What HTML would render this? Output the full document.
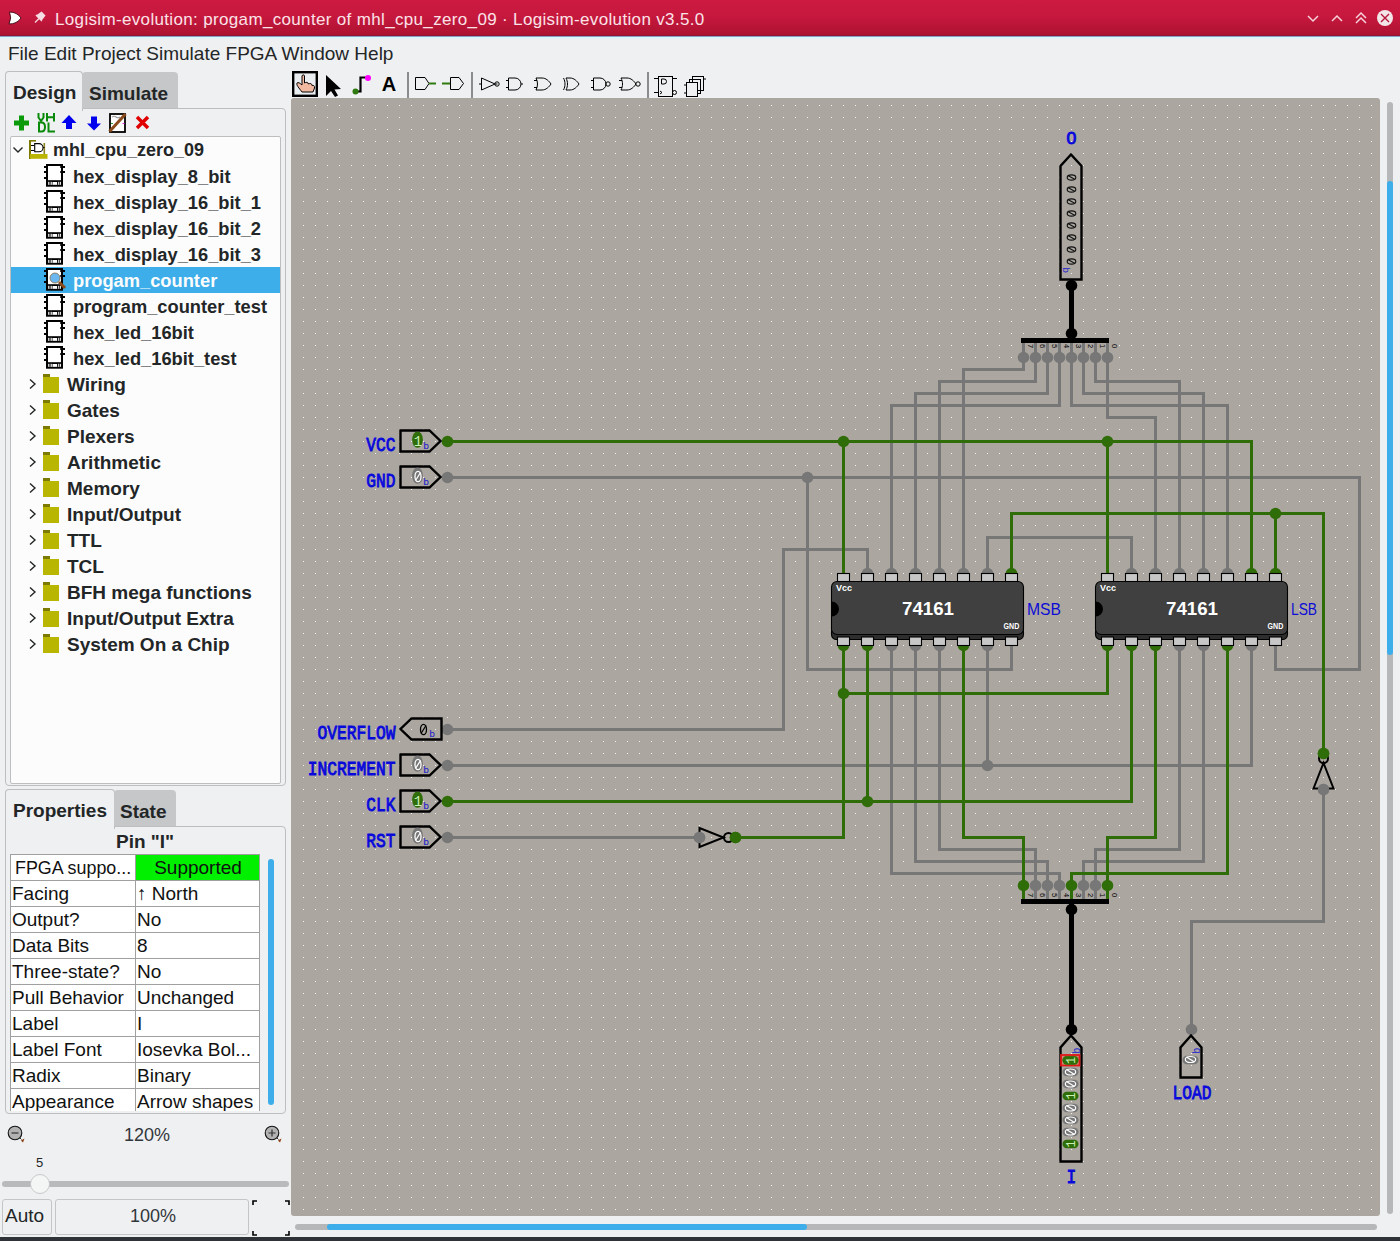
<!DOCTYPE html>
<html><head><meta charset="utf-8">
<style>
*{margin:0;padding:0;box-sizing:border-box}
html,body{width:1400px;height:1241px;overflow:hidden;background:#eff0f1;font-family:"Liberation Sans",sans-serif;color:#232627}
.abs{position:absolute}
#title{left:0;top:0;width:1400px;height:35px;background:linear-gradient(#cc1a41 0%,#c7183e 45%,#ad1231 100%)}
#title .t{left:55px;top:10px;font-size:17px;letter-spacing:0.34px;color:#fbe3e8;white-space:nowrap}
#menu{left:8px;top:42.5px;font-size:19px;white-space:nowrap;color:#232627}
.tab{font-weight:bold;font-size:19px;white-space:nowrap}
.row{position:absolute;height:26px;left:11px;width:270px}
.row span{position:absolute;top:3px;font-weight:bold;font-size:19px;white-space:nowrap;color:#232627}
.row svg{position:absolute}
.prop{position:absolute;font-size:19px;white-space:nowrap;color:#111}
</style></head><body>
<svg width="0" height="0" style="position:absolute">
 <defs>
  <symbol id="chip" viewBox="0 0 22 24">
   <rect x="3" y="1" width="15" height="20.7" fill="#fff" stroke="#000" stroke-width="2"/>
   <path d="M0 3h3M0 8h3M0 14h3M18 3h3M18 8h3" stroke="#000" stroke-width="1.9"/>
   <path d="M16 3h2M16 8h2" stroke="#000" stroke-width="1.6"/>
   <rect x="4" y="16.2" width="13" height="4.6" fill="#000"/>
   <rect x="4.2" y="17.8" width="1.2" height="3" fill="#fff"/>
   <rect x="6.6" y="17.8" width="1.2" height="3" fill="#fff"/>
   <rect x="8.5" y="18" width="4.6" height="2.8" fill="#fff"/>
   <rect x="14.2" y="17.8" width="1.1" height="3" fill="#fff"/>
   <rect x="16.1" y="17.8" width="0.9" height="3" fill="#fff"/>
  </symbol>
  <symbol id="folder" viewBox="0 0 17 20">
   <rect x="0" y="0" width="7" height="3" fill="#7c7a00"/>
   <rect x="0" y="3" width="16" height="16" fill="#b8b600"/>
  </symbol>
 </defs>
</svg>
<div id="title" class="abs">
  <svg class="abs" style="left:0;top:0" width="50" height="35" viewBox="0 0 50 35">
    <path d="M9.5 12 Q17 12 21 18 Q17 24 9 24 Q12 18 9.5 12Z" fill="#fff" stroke="#3a0a14" stroke-width="0.9"/>
    <path d="M35 22.5 L39 18.5" stroke="#f6dde3" stroke-width="1.3"/>
    <path d="M37.5 15.5 L41.5 12.5 L44.5 15.5 L41.5 19.5Z M36 15 L42 21" stroke="#f6dde3" stroke-width="1.6" fill="#f6dde3"/>
  </svg>
  <div class="abs t">Logisim-evolution: progam_counter of mhl_cpu_zero_09 · Logisim-evolution v3.5.0</div>
  <svg class="abs" style="left:1300px;top:0px" width="100" height="36" viewBox="1300 0 100 36">
    <path d="M1308 16 L1313 21 L1318 16" stroke="#f6d2da" stroke-width="1.5" fill="none"/>
    <path d="M1332 21 L1337 16 L1342 21" stroke="#f6d2da" stroke-width="1.5" fill="none"/>
    <path d="M1356 18 L1361 13 L1366 18 M1356 23 L1361 18 L1366 23" stroke="#f6d2da" stroke-width="1.5" fill="none"/>
    <circle cx="1385" cy="18" r="8" fill="#f3e6e9"/>
    <path d="M1381 14 L1389 22 M1389 14 L1381 22" stroke="#b5163a" stroke-width="1.4"/>
  </svg>
</div>
<div class="abs" style="left:0;top:35px;width:1400px;height:1px;background:#8c1535"></div><div class="abs" style="left:0;top:36px;width:1400px;height:1px;background:#8f9cc0"></div><div class="abs" style="left:0;top:37px;width:1400px;height:1px;background:#d2fbfc"></div><div class="abs" style="left:0;top:38px;width:1400px;height:1px;background:#e6f0f4"></div>
<div id="menu" class="abs">File Edit Project Simulate FPGA Window Help</div>

<!-- Design/Simulate tabs -->
<div class="abs" style="left:5px;top:71px;width:78px;height:40px;border:1px solid #bcbebf;border-bottom:none;border-radius:4px 4px 0 0;background:#eff0f1"></div>
<div class="abs" style="left:82px;top:72px;width:96px;height:36px;background:#c6c7c8;border-radius:4px 4px 0 0"></div>
<div class="abs tab" style="left:13px;top:82px">Design</div>
<div class="abs tab" style="left:89px;top:83px">Simulate</div>
<div class="abs" style="left:5px;top:108px;width:281px;height:678px;border:1px solid #bcbebf;border-top:1px solid #bcbebf;border-radius:0 4px 4px 4px"></div>
<div class="abs" style="left:6px;top:107px;width:76px;height:3px;background:#eff0f1"></div>
<!-- toolbar icons -->
<svg class="abs" style="left:10px;top:110px" width="145" height="26" viewBox="10 110 145 26">
  <path d="M14 123h15M21.5 115.5v15" stroke="#0a9a0a" stroke-width="5"/>
  <g stroke="#0a8a0a" stroke-width="2" fill="none">
   <path d="M38.5 113 V117.5 L41 121 L43.5 117.5 V113"/>
   <path d="M47 113 V121.5 M47 117.2 H54 M54 113 V121.5"/>
   <path d="M39 122.5 H41.5 Q45 122.5 45 127 Q45 131.5 41.5 131.5 H39 Z"/>
   <path d="M48.5 122.5 V131.5 H55"/>
  </g>
  <path d="M61.5 123 L69 115 L76.5 123 L72 123 L72 129 L66 129 L66 123Z" fill="#0000ee"/>
  <path d="M87 123.5 L94 130.5 L101 123.5 L97 123.5 L97 116.5 L91 116.5 L91 123.5Z" fill="#0000ee"/>
  <rect x="110" y="114" width="15" height="18" fill="#fff" stroke="#000" stroke-width="1.8"/>
  <path d="M112 117 Q114 115.5 116 117 T120 117" stroke="#999" stroke-width="1.2" fill="none"/>
  <path d="M111 123.5h2" stroke="#2a9a2a" stroke-width="1"/>
  <path d="M122.5 123.5h2" stroke="#e020e0" stroke-width="1"/>
  <path d="M109.5 131.5 L125.5 114" stroke="#8b4a1c" stroke-width="3"/>
  <path d="M137 117 L148 128 M148 117 L137 128" stroke="#e00000" stroke-width="3.5"/>
</svg>
<!-- tree -->
<div class="abs" style="left:10px;top:136px;width:271px;height:648px;background:#fcfcfc;border:1px solid #bcbebf;border-radius:2px"></div>
<div class="abs" style="left:11px;top:267px;width:269px;height:26px;background:#3daee9"></div>
<svg class="abs" style="left:12px;top:144px" width="12" height="12" viewBox="0 0 12 12"><path d="M1.5 3.5 L6 8 L10.5 3.5" stroke="#232627" stroke-width="1.4" fill="none"/></svg>
<svg class="abs" style="left:24px;top:136px" width="28" height="28" viewBox="24 136 28 28">
  <rect x="29" y="140" width="2" height="19" fill="#7c7800"/>
  <rect x="29" y="140" width="7" height="1.6" fill="#7c7800"/>
  <rect x="43.5" y="143" width="1.6" height="11" fill="#8a8720"/>
  <rect x="30" y="154" width="17.5" height="4.8" fill="#b9b500"/>
  <path d="M31 145.5h3.5M31 150.5h3.5M41.5 147.5h3" stroke="#000" stroke-width="1"/>
  <path d="M34.7 143.6h4.3a4 4 0 0 1 0 8.1h-4.3Z" fill="#fff" stroke="#000" stroke-width="1.1"/>
</svg>
<div class="abs" style="left:53px;top:140px;font-weight:bold;font-size:18px;white-space:nowrap">mhl_cpu_zero_09</div>
<svg class="abs" style="left:44px;top:164px" width="22" height="24"><use href="#chip"/></svg>
<div class="abs" style="left:73px;top:166px;font-weight:bold;font-size:18.3px;white-space:nowrap;color:#232627">hex_display_8_bit</div>
<svg class="abs" style="left:44px;top:190px" width="22" height="24"><use href="#chip"/></svg>
<div class="abs" style="left:73px;top:192px;font-weight:bold;font-size:18.3px;white-space:nowrap;color:#232627">hex_display_16_bit_1</div>
<svg class="abs" style="left:44px;top:216px" width="22" height="24"><use href="#chip"/></svg>
<div class="abs" style="left:73px;top:218px;font-weight:bold;font-size:18.3px;white-space:nowrap;color:#232627">hex_display_16_bit_2</div>
<svg class="abs" style="left:44px;top:242px" width="22" height="24"><use href="#chip"/></svg>
<div class="abs" style="left:73px;top:244px;font-weight:bold;font-size:18.3px;white-space:nowrap;color:#232627">hex_display_16_bit_3</div>
<svg class="abs" style="left:44px;top:268px" width="22" height="24"><use href="#chip"/></svg>
<svg class="abs" style="left:48px;top:271px" width="20" height="20" viewBox="0 0 20 20"><circle cx="7" cy="7" r="5" fill="#6ab8ef" stroke="#8a6a40" stroke-width="0.8"/><path d="M11 11 L17 17" stroke="#8b4a1c" stroke-width="3"/></svg>
<div class="abs" style="left:73px;top:270px;font-weight:bold;font-size:18.3px;white-space:nowrap;color:#fcfcfc">progam_counter</div>
<svg class="abs" style="left:44px;top:294px" width="22" height="24"><use href="#chip"/></svg>
<div class="abs" style="left:73px;top:296px;font-weight:bold;font-size:18.3px;white-space:nowrap;color:#232627">program_counter_test</div>
<svg class="abs" style="left:44px;top:320px" width="22" height="24"><use href="#chip"/></svg>
<div class="abs" style="left:73px;top:322px;font-weight:bold;font-size:18.3px;white-space:nowrap;color:#232627">hex_led_16bit</div>
<svg class="abs" style="left:44px;top:346px" width="22" height="24"><use href="#chip"/></svg>
<div class="abs" style="left:73px;top:348px;font-weight:bold;font-size:18.3px;white-space:nowrap;color:#232627">hex_led_16bit_test</div>
<svg class="abs" style="left:28px;top:378px" width="9" height="12" viewBox="0 0 9 12"><path d="M2 1.5 L7 6 L2 10.5" stroke="#232627" stroke-width="1.4" fill="none"/></svg>
<svg class="abs" style="left:43px;top:374px" width="17" height="20"><use href="#folder"/></svg>
<div class="abs" style="left:67px;top:374px;font-weight:bold;font-size:19px;white-space:nowrap">Wiring</div>
<svg class="abs" style="left:28px;top:404px" width="9" height="12" viewBox="0 0 9 12"><path d="M2 1.5 L7 6 L2 10.5" stroke="#232627" stroke-width="1.4" fill="none"/></svg>
<svg class="abs" style="left:43px;top:400px" width="17" height="20"><use href="#folder"/></svg>
<div class="abs" style="left:67px;top:400px;font-weight:bold;font-size:19px;white-space:nowrap">Gates</div>
<svg class="abs" style="left:28px;top:430px" width="9" height="12" viewBox="0 0 9 12"><path d="M2 1.5 L7 6 L2 10.5" stroke="#232627" stroke-width="1.4" fill="none"/></svg>
<svg class="abs" style="left:43px;top:426px" width="17" height="20"><use href="#folder"/></svg>
<div class="abs" style="left:67px;top:426px;font-weight:bold;font-size:19px;white-space:nowrap">Plexers</div>
<svg class="abs" style="left:28px;top:456px" width="9" height="12" viewBox="0 0 9 12"><path d="M2 1.5 L7 6 L2 10.5" stroke="#232627" stroke-width="1.4" fill="none"/></svg>
<svg class="abs" style="left:43px;top:452px" width="17" height="20"><use href="#folder"/></svg>
<div class="abs" style="left:67px;top:452px;font-weight:bold;font-size:19px;white-space:nowrap">Arithmetic</div>
<svg class="abs" style="left:28px;top:482px" width="9" height="12" viewBox="0 0 9 12"><path d="M2 1.5 L7 6 L2 10.5" stroke="#232627" stroke-width="1.4" fill="none"/></svg>
<svg class="abs" style="left:43px;top:478px" width="17" height="20"><use href="#folder"/></svg>
<div class="abs" style="left:67px;top:478px;font-weight:bold;font-size:19px;white-space:nowrap">Memory</div>
<svg class="abs" style="left:28px;top:508px" width="9" height="12" viewBox="0 0 9 12"><path d="M2 1.5 L7 6 L2 10.5" stroke="#232627" stroke-width="1.4" fill="none"/></svg>
<svg class="abs" style="left:43px;top:504px" width="17" height="20"><use href="#folder"/></svg>
<div class="abs" style="left:67px;top:504px;font-weight:bold;font-size:19px;white-space:nowrap">Input/Output</div>
<svg class="abs" style="left:28px;top:534px" width="9" height="12" viewBox="0 0 9 12"><path d="M2 1.5 L7 6 L2 10.5" stroke="#232627" stroke-width="1.4" fill="none"/></svg>
<svg class="abs" style="left:43px;top:530px" width="17" height="20"><use href="#folder"/></svg>
<div class="abs" style="left:67px;top:530px;font-weight:bold;font-size:19px;white-space:nowrap">TTL</div>
<svg class="abs" style="left:28px;top:560px" width="9" height="12" viewBox="0 0 9 12"><path d="M2 1.5 L7 6 L2 10.5" stroke="#232627" stroke-width="1.4" fill="none"/></svg>
<svg class="abs" style="left:43px;top:556px" width="17" height="20"><use href="#folder"/></svg>
<div class="abs" style="left:67px;top:556px;font-weight:bold;font-size:19px;white-space:nowrap">TCL</div>
<svg class="abs" style="left:28px;top:586px" width="9" height="12" viewBox="0 0 9 12"><path d="M2 1.5 L7 6 L2 10.5" stroke="#232627" stroke-width="1.4" fill="none"/></svg>
<svg class="abs" style="left:43px;top:582px" width="17" height="20"><use href="#folder"/></svg>
<div class="abs" style="left:67px;top:582px;font-weight:bold;font-size:19px;white-space:nowrap">BFH mega functions</div>
<svg class="abs" style="left:28px;top:612px" width="9" height="12" viewBox="0 0 9 12"><path d="M2 1.5 L7 6 L2 10.5" stroke="#232627" stroke-width="1.4" fill="none"/></svg>
<svg class="abs" style="left:43px;top:608px" width="17" height="20"><use href="#folder"/></svg>
<div class="abs" style="left:67px;top:608px;font-weight:bold;font-size:19px;white-space:nowrap">Input/Output Extra</div>
<svg class="abs" style="left:28px;top:638px" width="9" height="12" viewBox="0 0 9 12"><path d="M2 1.5 L7 6 L2 10.5" stroke="#232627" stroke-width="1.4" fill="none"/></svg>
<svg class="abs" style="left:43px;top:634px" width="17" height="20"><use href="#folder"/></svg>
<div class="abs" style="left:67px;top:634px;font-weight:bold;font-size:19px;white-space:nowrap">System On a Chip</div>


<!-- Properties panel -->
<div class="abs" style="left:5px;top:789px;width:110px;height:40px;border:1px solid #bcbebf;border-bottom:none;border-radius:4px 4px 0 0;background:#eff0f1"></div>
<div class="abs" style="left:114px;top:790px;width:62px;height:37px;background:#c6c7c8;border-radius:4px 4px 0 0"></div>
<div class="abs" style="left:5px;top:826px;width:281px;height:288px;border:1px solid #bcbebf;border-radius:0 4px 4px 4px"></div>
<div class="abs" style="left:6px;top:825px;width:108px;height:3px;background:#eff0f1"></div>
<div class="abs tab" style="left:13px;top:800px">Properties</div>
<div class="abs tab" style="left:120px;top:801px">State</div>
<div class="abs tab" style="left:116px;top:831px">Pin "I"</div>
<div class="abs" style="left:10px;top:854px;width:250px;height:257px;background:#fff;overflow:hidden;border-left:1px solid #a0a0a0;border-right:1px solid #a0a0a0">
<div class="abs" style="left:0;top:0px;width:250px;height:27px;border-top:1px solid #a0a0a0"></div>
<div class="abs" style="left:124px;top:0px;width:1px;height:27px;background:#a0a0a0"></div>
<div class="abs" style="left:125px;top:1px;width:124px;height:25px;background:#00f000"></div>
<div class="prop" style="left:125px;width:124px;text-align:center;top:3px">Supported</div>
<div class="prop" style="left:4px;top:3px;transform:scaleX(0.94);transform-origin:0 0">FPGA suppo...</div>
<div class="abs" style="left:0;top:26px;width:250px;height:27px;border-top:1px solid #a0a0a0"></div>
<div class="abs" style="left:124px;top:26px;width:1px;height:27px;background:#a0a0a0"></div>
<div class="prop" style="left:1px;top:29px">Facing</div>
<div class="prop" style="left:126px;top:29px">↑ North</div>
<div class="abs" style="left:0;top:52px;width:250px;height:27px;border-top:1px solid #a0a0a0"></div>
<div class="abs" style="left:124px;top:52px;width:1px;height:27px;background:#a0a0a0"></div>
<div class="prop" style="left:1px;top:55px">Output?</div>
<div class="prop" style="left:126px;top:55px">No</div>
<div class="abs" style="left:0;top:78px;width:250px;height:27px;border-top:1px solid #a0a0a0"></div>
<div class="abs" style="left:124px;top:78px;width:1px;height:27px;background:#a0a0a0"></div>
<div class="prop" style="left:1px;top:81px">Data Bits</div>
<div class="prop" style="left:126px;top:81px">8</div>
<div class="abs" style="left:0;top:104px;width:250px;height:27px;border-top:1px solid #a0a0a0"></div>
<div class="abs" style="left:124px;top:104px;width:1px;height:27px;background:#a0a0a0"></div>
<div class="prop" style="left:1px;top:107px">Three-state?</div>
<div class="prop" style="left:126px;top:107px">No</div>
<div class="abs" style="left:0;top:130px;width:250px;height:27px;border-top:1px solid #a0a0a0"></div>
<div class="abs" style="left:124px;top:130px;width:1px;height:27px;background:#a0a0a0"></div>
<div class="prop" style="left:1px;top:133px">Pull Behavior</div>
<div class="prop" style="left:126px;top:133px">Unchanged</div>
<div class="abs" style="left:0;top:156px;width:250px;height:27px;border-top:1px solid #a0a0a0"></div>
<div class="abs" style="left:124px;top:156px;width:1px;height:27px;background:#a0a0a0"></div>
<div class="prop" style="left:1px;top:159px">Label</div>
<div class="prop" style="left:126px;top:159px">I</div>
<div class="abs" style="left:0;top:182px;width:250px;height:27px;border-top:1px solid #a0a0a0"></div>
<div class="abs" style="left:124px;top:182px;width:1px;height:27px;background:#a0a0a0"></div>
<div class="prop" style="left:1px;top:185px">Label Font</div>
<div class="prop" style="left:126px;top:185px">Iosevka Bol...</div>
<div class="abs" style="left:0;top:208px;width:250px;height:27px;border-top:1px solid #a0a0a0"></div>
<div class="abs" style="left:124px;top:208px;width:1px;height:27px;background:#a0a0a0"></div>
<div class="prop" style="left:1px;top:211px">Radix</div>
<div class="prop" style="left:126px;top:211px">Binary</div>
<div class="abs" style="left:0;top:234px;width:250px;height:27px;border-top:1px solid #a0a0a0"></div>
<div class="abs" style="left:124px;top:234px;width:1px;height:27px;background:#a0a0a0"></div>
<div class="prop" style="left:1px;top:237px">Appearance</div>
<div class="prop" style="left:126px;top:237px">Arrow shapes</div>
</div>
<div class="abs" style="left:268px;top:859px;width:6px;height:246px;background:#3daee9;border-radius:3px"></div>
<!-- zoom controls -->
<svg class="abs" style="left:6px;top:1124px" width="22" height="22" viewBox="0 0 22 22"><circle cx="9" cy="9" r="6.8" fill="#b2b2b2" stroke="#111" stroke-width="1.1"/><path d="M5.5 9h7" stroke="#333" stroke-width="1.2"/><path d="M13.5 13.5 L15.5 15.5" stroke="#333" stroke-width="1"/><path d="M15 16.5 L18.5 14.5 L17 18.5Z" fill="#8b3a0c"/></svg>
<div class="abs" style="left:124px;top:1125px;font-size:18px;color:#31363b">120%</div>
<svg class="abs" style="left:263px;top:1124px" width="22" height="22" viewBox="0 0 22 22"><circle cx="9" cy="9" r="6.8" fill="#b2b2b2" stroke="#111" stroke-width="1.1"/><path d="M5.5 9h7M9 5.5v7" stroke="#333" stroke-width="1.2"/><path d="M13.5 13.5 L15.5 15.5" stroke="#333" stroke-width="1"/><path d="M15 16.5 L18.5 14.5 L17 18.5Z" fill="#8b3a0c"/></svg>
<div class="abs" style="left:36px;top:1155px;font-size:13px;color:#232627">5</div>
<div class="abs" style="left:2px;top:1181px;width:287px;height:6px;background:#b8babc;border-radius:3px"></div>
<div class="abs" style="left:30px;top:1174px;width:20px;height:20px;background:#f4f5f5;border:1px solid #c8c9ca;border-radius:50%"></div>
<div class="abs" style="left:2px;top:1199px;width:50px;height:36px;background:#eff0f1;border:1px solid #c4c5c6;border-radius:3px"></div>
<div class="abs" style="left:5px;top:1205px;font-size:19px;color:#232627">Auto</div>
<div class="abs" style="left:55px;top:1199px;width:194px;height:36px;background:#eff0f1;border:1px solid #c4c5c6;border-radius:3px"></div>
<div class="abs" style="left:130px;top:1206px;font-size:18px;color:#31363b">100%</div>
<svg class="abs" style="left:250px;top:1198px" width="42" height="40" viewBox="0 0 42 40"><path d="M3 7V3h4M35 3h4v4M3 33v4h4M35 37h4v-4" stroke="#000" stroke-width="1.6" fill="none"/></svg>
<div class="abs" style="left:0;top:1237px;width:1400px;height:4px;background:#2f3338"></div>
<!--TOOLBAR--><svg class="abs" style="left:288px;top:66px" width="430" height="34" viewBox="288 66 430 34">
 <rect x="293.2" y="72.2" width="23.6" height="23.6" fill="#eaeef0" stroke="#000" stroke-width="2.4"/>
 <path d="M302 92 C299 88 296 85 297 83 C298 82 300 83 302 85 L302 76 C302 74.5 304.5 74.5 304.5 76 L304.5 83 C306 82 308 82 308.5 84 C310 83 312 83.5 312 85.5 C313 85 315 85.5 314.5 88 L313 92 Z" fill="#f1b9a0" stroke="#000" stroke-width="1"/>
 <path d="M326 75 L326 96 L331 91 L335 97 L338 95.5 L334.5 89.5 L341 89 Z" fill="#000"/>
 <path d="M355.5 91.5 H360.5 V77.5 H367" stroke="#000" stroke-width="2.2" fill="none"/>
 <circle cx="355.5" cy="91.5" r="3" fill="#2f7a10"/>
 <circle cx="368" cy="78" r="3" fill="#ff00ff"/>
 <text x="389" y="91" font-family="Liberation Sans" font-weight="bold" font-size="20" text-anchor="middle" fill="#000">A</text>
 <rect x="407" y="72" width="2" height="26" fill="#8a8c8e"/>
 <path d="M415.5 77.5 H425 L429 83.5 L425 89.5 H415.5 Z" fill="none" stroke="#000" stroke-width="1"/>
 <path d="M429 83.5 H436" stroke="#2f7a10" stroke-width="2"/>
 <path d="M450.5 77.5 H459 L463.5 83.5 L459 89.5 H450.5 Z" fill="none" stroke="#000" stroke-width="1"/>
 <path d="M442 83.5 H450" stroke="#2f7a10" stroke-width="2"/>
 <rect x="471" y="72" width="2" height="26" fill="#8a8c8e"/>
 <g fill="none" stroke="#000" stroke-width="1">
  <path d="M481.5 78 V90 L495 84 Z M479 84 H481.5 M495 84 H497.5"/><circle cx="497" cy="84" r="2.2"/>
  <path d="M508.5 78 H515 A6 6 0 0 1 515 90 H508.5 Z M506 80.5 H508.5 M506 87.5 H508.5 M521 84 H523"/>
  <path d="M536 78 H542 C546 78 549 81 551 84 C549 87 546 90 542 90 H536 C538 86 538 82 536 78 Z M534 80.5 H537 M534 87.5 H537"/>
  <path d="M566 78 H570 C574 78 577 81 579 84 C577 87 574 90 570 90 H566 C568 86 568 82 566 78 Z M563.5 78 C565.5 82 565.5 86 563.5 90"/>
  <path d="M593.5 78 H600 A6 6 0 0 1 600 90 H593.5 Z M591 80.5 H593.5 M591 87.5 H593.5"/><circle cx="608" cy="84" r="2.2"/>
  <path d="M621 78 H627 C631 78 634 81 636 84 C634 87 631 90 627 90 H621 C623 86 623 82 621 78 Z M619 80.5 H622 M619 87.5 H622"/><circle cx="638" cy="84" r="2.2"/>
 </g>
 <rect x="647" y="72" width="2" height="26" fill="#8a8c8e"/>
 <g fill="none" stroke="#000" stroke-width="1">
  <rect x="658.5" y="76.5" width="14" height="20"/><path d="M654 78.5 H658.5 M672.5 78.5 H677 M654 92.5 H658.5"/>
  <path d="M661.5 79 H664 A2.5 2.5 0 0 1 664 84 H661.5 Z"/><circle cx="674.5" cy="92.5" r="2"/>
  <path d="M660 91 L662 92.5 L660 94"/>
  <rect x="692.5" y="76.5" width="11" height="14"/><rect x="689.5" y="79.5" width="11" height="14"/><rect x="686.5" y="82.5" width="11" height="14" fill="#eff0f1"/>
  <path d="M684 85 H686.5 M684 93 H686.5 M703.5 79 H706"/>
 </g>
</svg><!--/TOOLBAR-->
<!--CANVAS--><svg class="abs" style="left:0;top:0" width="1400" height="1241" viewBox="0 0 1400 1241" font-family="Liberation Mono">
<defs><pattern id="grid" patternUnits="userSpaceOnUse" x="3" y="9" width="12" height="12"><rect x="0" y="0" width="1" height="1" fill="#f2f2f2"/></pattern>
<clipPath id="cv"><rect x="291" y="98" width="1089" height="1118" rx="3"/></clipPath></defs>
<rect x="291" y="98" width="1089" height="1118" rx="3" fill="#aba69f"/>
<rect x="292" y="98" width="1088" height="1118" rx="3" fill="url(#grid)"/>
<g clip-path="url(#cv)"><g transform="translate(0.5,0.5)" stroke-linecap="square" stroke-linejoin="miter" fill="none">
<path d="M447 477 L1359 477 L1359 669 L1275 669 L1275 645" stroke="#777777" stroke-width="3"/>
<path d="M807 477 L807 669 L1011 669 L1011 645" stroke="#777777" stroke-width="3"/>
<path d="M1023 357 L1023 369 L963 369 L963 573" stroke="#777777" stroke-width="3"/>
<path d="M1035 357 L1035 381 L939 381 L939 573" stroke="#777777" stroke-width="3"/>
<path d="M1047 357 L1047 393 L915 393 L915 573" stroke="#777777" stroke-width="3"/>
<path d="M1059 357 L1059 405 L891 405 L891 573" stroke="#777777" stroke-width="3"/>
<path d="M1071 357 L1071 405 L1227 405 L1227 573" stroke="#777777" stroke-width="3"/>
<path d="M1083 357 L1083 393 L1203 393 L1203 573" stroke="#777777" stroke-width="3"/>
<path d="M1095 357 L1095 381 L1179 381 L1179 573" stroke="#777777" stroke-width="3"/>
<path d="M1107 357 L1107 417 L1155 417 L1155 573" stroke="#777777" stroke-width="3"/>
<path d="M447 729 L783 729 L783 549 L867 549 L867 573" stroke="#777777" stroke-width="3"/>
<path d="M1131 573 L1131 537 L987 537 L987 573" stroke="#777777" stroke-width="3"/>
<path d="M447 765 L1251 765 L1251 645" stroke="#777777" stroke-width="3"/>
<path d="M987 765 L987 645" stroke="#777777" stroke-width="3"/>
<path d="M447 837 L699 837" stroke="#777777" stroke-width="3"/>
<path d="M1035 885 L1035 849 L939 849 L939 645" stroke="#777777" stroke-width="3"/>
<path d="M1047 885 L1047 861 L915 861 L915 645" stroke="#777777" stroke-width="3"/>
<path d="M1059 885 L1059 873 L891 873 L891 645" stroke="#777777" stroke-width="3"/>
<path d="M1083 885 L1083 861 L1203 861 L1203 645" stroke="#777777" stroke-width="3"/>
<path d="M1095 885 L1095 849 L1179 849 L1179 645" stroke="#777777" stroke-width="3"/>
<path d="M1191 1029 L1191 921 L1323 921 L1323 789" stroke="#777777" stroke-width="3"/>
<path d="M447 441 L1251 441 L1251 573" stroke="#2f6d08" stroke-width="3"/>
<path d="M843 441 L843 573" stroke="#2f6d08" stroke-width="3"/>
<path d="M1107 441 L1107 573" stroke="#2f6d08" stroke-width="3"/>
<path d="M1011 573 L1011 513 L1323 513 L1323 753" stroke="#2f6d08" stroke-width="3"/>
<path d="M1275 513 L1275 573" stroke="#2f6d08" stroke-width="3"/>
<path d="M447 801 L1131 801 L1131 645" stroke="#2f6d08" stroke-width="3"/>
<path d="M867 801 L867 645" stroke="#2f6d08" stroke-width="3"/>
<path d="M735 837 L843 837 L843 645" stroke="#2f6d08" stroke-width="3"/>
<path d="M843 693 L1107 693 L1107 645" stroke="#2f6d08" stroke-width="3"/>
<path d="M1023 885 L1023 837 L963 837 L963 645" stroke="#2f6d08" stroke-width="3"/>
<path d="M1071 885 L1071 873 L1227 873 L1227 645" stroke="#2f6d08" stroke-width="3"/>
<path d="M1107 885 L1107 837 L1155 837 L1155 645" stroke="#2f6d08" stroke-width="3"/>
<path d="M1023 343 L1023 357" stroke="#777777" stroke-width="3"/>
<path d="M1035 343 L1035 357" stroke="#777777" stroke-width="3"/>
<path d="M1047 343 L1047 357" stroke="#777777" stroke-width="3"/>
<path d="M1059 343 L1059 357" stroke="#777777" stroke-width="3"/>
<path d="M1071 343 L1071 357" stroke="#777777" stroke-width="3"/>
<path d="M1083 343 L1083 357" stroke="#777777" stroke-width="3"/>
<path d="M1095 343 L1095 357" stroke="#777777" stroke-width="3"/>
<path d="M1107 343 L1107 357" stroke="#777777" stroke-width="3"/>
<path d="M1023 885 L1023 899" stroke="#2f6d08" stroke-width="3"/>
<path d="M1035 885 L1035 899" stroke="#777777" stroke-width="3"/>
<path d="M1047 885 L1047 899" stroke="#777777" stroke-width="3"/>
<path d="M1059 885 L1059 899" stroke="#777777" stroke-width="3"/>
<path d="M1071 885 L1071 899" stroke="#2f6d08" stroke-width="3"/>
<path d="M1083 885 L1083 899" stroke="#777777" stroke-width="3"/>
<path d="M1095 885 L1095 899" stroke="#777777" stroke-width="3"/>
<path d="M1107 885 L1107 899" stroke="#2f6d08" stroke-width="3"/>
<path d="M1071 285 L1071 338" stroke="#000000" stroke-width="5"/>
<path d="M1071 904 L1071 1029" stroke="#000000" stroke-width="5"/>
</g>
<circle cx="447.5" cy="441.5" r="5.8" fill="#2f6d08"/>
<circle cx="843.5" cy="441.5" r="5.8" fill="#2f6d08"/>
<circle cx="1107.5" cy="441.5" r="5.8" fill="#2f6d08"/>
<circle cx="1275.5" cy="513.5" r="5.8" fill="#2f6d08"/>
<circle cx="843.5" cy="693.5" r="5.8" fill="#2f6d08"/>
<circle cx="867.5" cy="801.5" r="5.8" fill="#2f6d08"/>
<circle cx="447.5" cy="801.5" r="5.8" fill="#2f6d08"/>
<circle cx="735.5" cy="837.5" r="5.8" fill="#2f6d08"/>
<circle cx="1323.5" cy="753.5" r="5.8" fill="#2f6d08"/>
<circle cx="1023.5" cy="885.5" r="5.8" fill="#2f6d08"/>
<circle cx="1071.5" cy="885.5" r="5.8" fill="#2f6d08"/>
<circle cx="1107.5" cy="885.5" r="5.8" fill="#2f6d08"/>
<circle cx="447.5" cy="477.5" r="5.8" fill="#777777"/>
<circle cx="807.5" cy="477.5" r="5.8" fill="#777777"/>
<circle cx="447.5" cy="729.5" r="5.8" fill="#777777"/>
<circle cx="447.5" cy="765.5" r="5.8" fill="#777777"/>
<circle cx="987.5" cy="765.5" r="5.8" fill="#777777"/>
<circle cx="447.5" cy="837.5" r="5.8" fill="#777777"/>
<circle cx="699.5" cy="837.5" r="5.8" fill="#777777"/>
<circle cx="1323.5" cy="789.5" r="5.8" fill="#777777"/>
<circle cx="1191.5" cy="1029.5" r="5.8" fill="#777777"/>
<circle cx="1035.5" cy="885.5" r="5.8" fill="#777777"/>
<circle cx="1047.5" cy="885.5" r="5.8" fill="#777777"/>
<circle cx="1059.5" cy="885.5" r="5.8" fill="#777777"/>
<circle cx="1083.5" cy="885.5" r="5.8" fill="#777777"/>
<circle cx="1095.5" cy="885.5" r="5.8" fill="#777777"/>
<circle cx="1023.5" cy="357.5" r="5.8" fill="#777777"/>
<circle cx="1035.5" cy="357.5" r="5.8" fill="#777777"/>
<circle cx="1047.5" cy="357.5" r="5.8" fill="#777777"/>
<circle cx="1059.5" cy="357.5" r="5.8" fill="#777777"/>
<circle cx="1071.5" cy="357.5" r="5.8" fill="#777777"/>
<circle cx="1083.5" cy="357.5" r="5.8" fill="#777777"/>
<circle cx="1095.5" cy="357.5" r="5.8" fill="#777777"/>
<circle cx="1107.5" cy="357.5" r="5.8" fill="#777777"/>
<circle cx="1071.5" cy="285.5" r="5.8" fill="#000000"/>
<circle cx="1071.5" cy="333.5" r="5.8" fill="#000000"/>
<circle cx="1071.5" cy="909.5" r="5.8" fill="#000000"/>
<circle cx="1071.5" cy="1029.5" r="5.8" fill="#000000"/>
<rect x="1021" y="338" width="88" height="5" fill="#000000"/>
<rect x="1021" y="899" width="88" height="5" fill="#000000"/>
<text transform="translate(1028,346) rotate(90)" font-size="7.5" text-anchor="middle" fill="#000" font-family="Liberation Sans">7</text>
<text transform="translate(1028,895) rotate(90)" font-size="7.5" text-anchor="middle" fill="#000" font-family="Liberation Sans">7</text>
<text transform="translate(1040,346) rotate(90)" font-size="7.5" text-anchor="middle" fill="#000" font-family="Liberation Sans">6</text>
<text transform="translate(1040,895) rotate(90)" font-size="7.5" text-anchor="middle" fill="#000" font-family="Liberation Sans">6</text>
<text transform="translate(1052,346) rotate(90)" font-size="7.5" text-anchor="middle" fill="#000" font-family="Liberation Sans">5</text>
<text transform="translate(1052,895) rotate(90)" font-size="7.5" text-anchor="middle" fill="#000" font-family="Liberation Sans">5</text>
<text transform="translate(1064,346) rotate(90)" font-size="7.5" text-anchor="middle" fill="#000" font-family="Liberation Sans">4</text>
<text transform="translate(1064,895) rotate(90)" font-size="7.5" text-anchor="middle" fill="#000" font-family="Liberation Sans">4</text>
<text transform="translate(1076,346) rotate(90)" font-size="7.5" text-anchor="middle" fill="#000" font-family="Liberation Sans">3</text>
<text transform="translate(1076,895) rotate(90)" font-size="7.5" text-anchor="middle" fill="#000" font-family="Liberation Sans">3</text>
<text transform="translate(1088,346) rotate(90)" font-size="7.5" text-anchor="middle" fill="#000" font-family="Liberation Sans">2</text>
<text transform="translate(1088,895) rotate(90)" font-size="7.5" text-anchor="middle" fill="#000" font-family="Liberation Sans">2</text>
<text transform="translate(1100,346) rotate(90)" font-size="7.5" text-anchor="middle" fill="#000" font-family="Liberation Sans">1</text>
<text transform="translate(1100,895) rotate(90)" font-size="7.5" text-anchor="middle" fill="#000" font-family="Liberation Sans">1</text>
<text transform="translate(1112,346) rotate(90)" font-size="7.5" text-anchor="middle" fill="#000" font-family="Liberation Sans">0</text>
<text transform="translate(1112,895) rotate(90)" font-size="7.5" text-anchor="middle" fill="#000" font-family="Liberation Sans">0</text>
<rect x="831.5" y="626.5" width="192" height="13" rx="5" fill="#2e2e2e" stroke="#000" stroke-width="1.1"/>
<circle cx="843.5" cy="645.5" r="5.8" fill="#2f6d08"/>
<circle cx="867.5" cy="573.5" r="5.8" fill="#777777"/>
<circle cx="867.5" cy="645.5" r="5.8" fill="#2f6d08"/>
<circle cx="891.5" cy="573.5" r="5.8" fill="#777777"/>
<circle cx="891.5" cy="645.5" r="5.8" fill="#777777"/>
<circle cx="915.5" cy="573.5" r="5.8" fill="#777777"/>
<circle cx="915.5" cy="645.5" r="5.8" fill="#777777"/>
<circle cx="939.5" cy="573.5" r="5.8" fill="#777777"/>
<circle cx="939.5" cy="645.5" r="5.8" fill="#777777"/>
<circle cx="963.5" cy="573.5" r="5.8" fill="#777777"/>
<circle cx="963.5" cy="645.5" r="5.8" fill="#2f6d08"/>
<circle cx="987.5" cy="573.5" r="5.8" fill="#777777"/>
<circle cx="987.5" cy="645.5" r="5.8" fill="#777777"/>
<circle cx="1011.5" cy="573.5" r="5.8" fill="#2f6d08"/>
<rect x="831.5" y="581.5" width="192" height="53" rx="5.5" fill="#404040" stroke="#000" stroke-width="1.1"/>
<path d="M831.5 601.5 A7 7 0 0 1 831.5 616.5 Z" fill="#000"/>
<rect x="837.5" y="573.5" width="12" height="8" fill="#c8c7c8" stroke="#000" stroke-width="1.1"/>
<rect x="837.5" y="637" width="12" height="8.5" fill="#c8c7c8" stroke="#000" stroke-width="1.1"/>
<rect x="861.5" y="573.5" width="12" height="8" fill="#c8c7c8" stroke="#000" stroke-width="1.1"/>
<rect x="861.5" y="637" width="12" height="8.5" fill="#c8c7c8" stroke="#000" stroke-width="1.1"/>
<rect x="885.5" y="573.5" width="12" height="8" fill="#c8c7c8" stroke="#000" stroke-width="1.1"/>
<rect x="885.5" y="637" width="12" height="8.5" fill="#c8c7c8" stroke="#000" stroke-width="1.1"/>
<rect x="909.5" y="573.5" width="12" height="8" fill="#c8c7c8" stroke="#000" stroke-width="1.1"/>
<rect x="909.5" y="637" width="12" height="8.5" fill="#c8c7c8" stroke="#000" stroke-width="1.1"/>
<rect x="933.5" y="573.5" width="12" height="8" fill="#c8c7c8" stroke="#000" stroke-width="1.1"/>
<rect x="933.5" y="637" width="12" height="8.5" fill="#c8c7c8" stroke="#000" stroke-width="1.1"/>
<rect x="957.5" y="573.5" width="12" height="8" fill="#c8c7c8" stroke="#000" stroke-width="1.1"/>
<rect x="957.5" y="637" width="12" height="8.5" fill="#c8c7c8" stroke="#000" stroke-width="1.1"/>
<rect x="981.5" y="573.5" width="12" height="8" fill="#c8c7c8" stroke="#000" stroke-width="1.1"/>
<rect x="981.5" y="637" width="12" height="8.5" fill="#c8c7c8" stroke="#000" stroke-width="1.1"/>
<rect x="1005.5" y="573.5" width="12" height="8" fill="#c8c7c8" stroke="#000" stroke-width="1.1"/>
<rect x="1005.5" y="637" width="12" height="8.5" fill="#c8c7c8" stroke="#000" stroke-width="1.1"/>
<text x="836" y="591" font-family="Liberation Sans" font-weight="bold" font-size="9" fill="#fff">Vcc</text>
<text x="1003.5" y="629.3" font-family="Liberation Sans" font-weight="bold" font-size="8.6" fill="#fff" textLength="15.8" lengthAdjust="spacingAndGlyphs">GND</text>
<text x="928" y="614.5" font-family="Liberation Sans" font-weight="bold" font-size="17.5" text-anchor="middle" fill="#fff" textLength="52" lengthAdjust="spacingAndGlyphs">74161</text>
<text x="1027" y="615" font-family="Liberation Sans" font-size="16.5" fill="#0c0cd6" textLength="34" lengthAdjust="spacingAndGlyphs">MSB</text>
<rect x="1095.5" y="626.5" width="192" height="13" rx="5" fill="#2e2e2e" stroke="#000" stroke-width="1.1"/>
<circle cx="1107.5" cy="645.5" r="5.8" fill="#2f6d08"/>
<circle cx="1131.5" cy="573.5" r="5.8" fill="#777777"/>
<circle cx="1131.5" cy="645.5" r="5.8" fill="#2f6d08"/>
<circle cx="1155.5" cy="573.5" r="5.8" fill="#777777"/>
<circle cx="1155.5" cy="645.5" r="5.8" fill="#2f6d08"/>
<circle cx="1179.5" cy="573.5" r="5.8" fill="#777777"/>
<circle cx="1179.5" cy="645.5" r="5.8" fill="#777777"/>
<circle cx="1203.5" cy="573.5" r="5.8" fill="#777777"/>
<circle cx="1203.5" cy="645.5" r="5.8" fill="#777777"/>
<circle cx="1227.5" cy="573.5" r="5.8" fill="#777777"/>
<circle cx="1227.5" cy="645.5" r="5.8" fill="#2f6d08"/>
<circle cx="1251.5" cy="573.5" r="5.8" fill="#2f6d08"/>
<circle cx="1251.5" cy="645.5" r="5.8" fill="#777777"/>
<circle cx="1275.5" cy="573.5" r="5.8" fill="#2f6d08"/>
<rect x="1095.5" y="581.5" width="192" height="53" rx="5.5" fill="#404040" stroke="#000" stroke-width="1.1"/>
<path d="M1095.5 601.5 A7 7 0 0 1 1095.5 616.5 Z" fill="#000"/>
<rect x="1101.5" y="573.5" width="12" height="8" fill="#c8c7c8" stroke="#000" stroke-width="1.1"/>
<rect x="1101.5" y="637" width="12" height="8.5" fill="#c8c7c8" stroke="#000" stroke-width="1.1"/>
<rect x="1125.5" y="573.5" width="12" height="8" fill="#c8c7c8" stroke="#000" stroke-width="1.1"/>
<rect x="1125.5" y="637" width="12" height="8.5" fill="#c8c7c8" stroke="#000" stroke-width="1.1"/>
<rect x="1149.5" y="573.5" width="12" height="8" fill="#c8c7c8" stroke="#000" stroke-width="1.1"/>
<rect x="1149.5" y="637" width="12" height="8.5" fill="#c8c7c8" stroke="#000" stroke-width="1.1"/>
<rect x="1173.5" y="573.5" width="12" height="8" fill="#c8c7c8" stroke="#000" stroke-width="1.1"/>
<rect x="1173.5" y="637" width="12" height="8.5" fill="#c8c7c8" stroke="#000" stroke-width="1.1"/>
<rect x="1197.5" y="573.5" width="12" height="8" fill="#c8c7c8" stroke="#000" stroke-width="1.1"/>
<rect x="1197.5" y="637" width="12" height="8.5" fill="#c8c7c8" stroke="#000" stroke-width="1.1"/>
<rect x="1221.5" y="573.5" width="12" height="8" fill="#c8c7c8" stroke="#000" stroke-width="1.1"/>
<rect x="1221.5" y="637" width="12" height="8.5" fill="#c8c7c8" stroke="#000" stroke-width="1.1"/>
<rect x="1245.5" y="573.5" width="12" height="8" fill="#c8c7c8" stroke="#000" stroke-width="1.1"/>
<rect x="1245.5" y="637" width="12" height="8.5" fill="#c8c7c8" stroke="#000" stroke-width="1.1"/>
<rect x="1269.5" y="573.5" width="12" height="8" fill="#c8c7c8" stroke="#000" stroke-width="1.1"/>
<rect x="1269.5" y="637" width="12" height="8.5" fill="#c8c7c8" stroke="#000" stroke-width="1.1"/>
<text x="1100" y="591" font-family="Liberation Sans" font-weight="bold" font-size="9" fill="#fff">Vcc</text>
<text x="1267.5" y="629.3" font-family="Liberation Sans" font-weight="bold" font-size="8.6" fill="#fff" textLength="15.8" lengthAdjust="spacingAndGlyphs">GND</text>
<text x="1192" y="614.5" font-family="Liberation Sans" font-weight="bold" font-size="17.5" text-anchor="middle" fill="#fff" textLength="52" lengthAdjust="spacingAndGlyphs">74161</text>
<text x="1291" y="615" font-family="Liberation Sans" font-size="16.5" fill="#0c0cd6" textLength="26" lengthAdjust="spacingAndGlyphs">LSB</text>
<path d="M699.5 828 L723.5 837.5 L699.5 847 Z" fill="none" stroke="#000" stroke-width="2"/>
<circle cx="728.5" cy="837.5" r="4.5" fill="none" stroke="#000" stroke-width="2"/>
<circle cx="735.5" cy="837.5" r="5.8" fill="#2f6d08"/>
<circle cx="699.5" cy="837.5" r="5.8" fill="#777777"/>
<path d="M1313.5 788.5 L1323.5 763 L1333.5 788.5 Z" fill="none" stroke="#000" stroke-width="2"/>
<circle cx="1323.5" cy="758.5" r="4.5" fill="none" stroke="#000" stroke-width="2"/>
<circle cx="1323.5" cy="753.5" r="5.8" fill="#2f6d08"/>
<circle cx="1323.5" cy="789.5" r="5.8" fill="#777777"/>
<path d="M400.5 430.5 H429.5 L440.5 441 L429.5 451.5 H400.5 Z" fill="none" stroke="#000" stroke-width="2.4"/>
<ellipse cx="417.5" cy="439.6" rx="5.4" ry="8.2" fill="#2f6d08"/>
<text x="418" y="446" font-size="14" text-anchor="middle" fill="#c8f0b0">1</text>
<text x="423.5" y="448.8" font-size="9.5" fill="#1010d0" font-family="Liberation Sans">b</text>
<text x="395.5" y="450.6" font-family="Liberation Mono" font-weight="normal" font-size="20.6" fill="#0808dc" stroke="#0808dc" stroke-width="0.9" text-anchor="end" textLength="29.2" lengthAdjust="spacingAndGlyphs">VCC</text>
<path d="M400.5 466.5 H429.5 L440.5 477 L429.5 487.5 H400.5 Z" fill="none" stroke="#000" stroke-width="2.4"/>
<ellipse cx="417.5" cy="475.6" rx="5.4" ry="8.2" fill="#777777"/>
<ellipse cx="418" cy="476.5" rx="3" ry="5.2" fill="none" stroke="#ffffff" stroke-width="1.3"/>
<path d="M420.5 472.5 L415.5 480.5" stroke="#ffffff" stroke-width="1.3"/>
<text x="423.5" y="484.8" font-size="9.5" fill="#1010d0" font-family="Liberation Sans">b</text>
<text x="395.5" y="486.6" font-family="Liberation Mono" font-weight="normal" font-size="20.6" fill="#0808dc" stroke="#0808dc" stroke-width="0.9" text-anchor="end" textLength="29.2" lengthAdjust="spacingAndGlyphs">GND</text>
<path d="M400.5 754.5 H429.5 L440.5 765 L429.5 775.5 H400.5 Z" fill="none" stroke="#000" stroke-width="2.4"/>
<ellipse cx="417.5" cy="763.6" rx="5.4" ry="8.2" fill="#777777"/>
<ellipse cx="418" cy="764.5" rx="3" ry="5.2" fill="none" stroke="#ffffff" stroke-width="1.3"/>
<path d="M420.5 760.5 L415.5 768.5" stroke="#ffffff" stroke-width="1.3"/>
<text x="423.5" y="772.8" font-size="9.5" fill="#1010d0" font-family="Liberation Sans">b</text>
<text x="395.5" y="774.6" font-family="Liberation Mono" font-weight="normal" font-size="20.6" fill="#0808dc" stroke="#0808dc" stroke-width="0.9" text-anchor="end" textLength="87.8" lengthAdjust="spacingAndGlyphs">INCREMENT</text>
<path d="M400.5 790.5 H429.5 L440.5 801 L429.5 811.5 H400.5 Z" fill="none" stroke="#000" stroke-width="2.4"/>
<ellipse cx="417.5" cy="799.6" rx="5.4" ry="8.2" fill="#2f6d08"/>
<text x="418" y="806" font-size="14" text-anchor="middle" fill="#c8f0b0">1</text>
<text x="423.5" y="808.8" font-size="9.5" fill="#1010d0" font-family="Liberation Sans">b</text>
<text x="395.5" y="810.6" font-family="Liberation Mono" font-weight="normal" font-size="20.6" fill="#0808dc" stroke="#0808dc" stroke-width="0.9" text-anchor="end" textLength="29.2" lengthAdjust="spacingAndGlyphs">CLK</text>
<path d="M400.5 826.5 H429.5 L440.5 837 L429.5 847.5 H400.5 Z" fill="none" stroke="#000" stroke-width="2.4"/>
<ellipse cx="417.5" cy="835.6" rx="5.4" ry="8.2" fill="#777777"/>
<ellipse cx="418" cy="836.5" rx="3" ry="5.2" fill="none" stroke="#ffffff" stroke-width="1.3"/>
<path d="M420.5 832.5 L415.5 840.5" stroke="#ffffff" stroke-width="1.3"/>
<text x="423.5" y="844.8" font-size="9.5" fill="#1010d0" font-family="Liberation Sans">b</text>
<text x="395.5" y="846.6" font-family="Liberation Mono" font-weight="normal" font-size="20.6" fill="#0808dc" stroke="#0808dc" stroke-width="0.9" text-anchor="end" textLength="29.2" lengthAdjust="spacingAndGlyphs">RST</text>
<path d="M441.5 718.5 H411.5 L400.5 729 L411.5 739.5 H441.5 Z" fill="none" stroke="#000" stroke-width="2.4"/>
<ellipse cx="423.5" cy="729.5" rx="3" ry="5.2" fill="none" stroke="#000" stroke-width="1.3"/>
<path d="M426.0 725.5 L421.0 733.5" stroke="#000" stroke-width="1.3"/>
<text x="429.5" y="736.8" font-size="9.5" fill="#1010d0" font-family="Liberation Sans">b</text>
<text x="395.5" y="738.6" font-family="Liberation Mono" font-weight="normal" font-size="20.6" fill="#0808dc" stroke="#0808dc" stroke-width="0.9" text-anchor="end" textLength="78.0" lengthAdjust="spacingAndGlyphs">OVERFLOW</text>
<path d="M1060.5 279.5 V166 L1071 154.5 L1081.5 166 V279.5 Z" fill="none" stroke="#000" stroke-width="2.4"/>
<ellipse cx="1071.5" cy="177.5" rx="4.3" ry="2.6" fill="none" stroke="#111" stroke-width="1.1"/>
<path d="M1068 175.5 L1075 179.5" stroke="#111" stroke-width="1.1"/>
<ellipse cx="1071.5" cy="189.5" rx="4.3" ry="2.6" fill="none" stroke="#111" stroke-width="1.1"/>
<path d="M1068 187.5 L1075 191.5" stroke="#111" stroke-width="1.1"/>
<ellipse cx="1071.5" cy="201.5" rx="4.3" ry="2.6" fill="none" stroke="#111" stroke-width="1.1"/>
<path d="M1068 199.5 L1075 203.5" stroke="#111" stroke-width="1.1"/>
<ellipse cx="1071.5" cy="213.5" rx="4.3" ry="2.6" fill="none" stroke="#111" stroke-width="1.1"/>
<path d="M1068 211.5 L1075 215.5" stroke="#111" stroke-width="1.1"/>
<ellipse cx="1071.5" cy="225.5" rx="4.3" ry="2.6" fill="none" stroke="#111" stroke-width="1.1"/>
<path d="M1068 223.5 L1075 227.5" stroke="#111" stroke-width="1.1"/>
<ellipse cx="1071.5" cy="237.5" rx="4.3" ry="2.6" fill="none" stroke="#111" stroke-width="1.1"/>
<path d="M1068 235.5 L1075 239.5" stroke="#111" stroke-width="1.1"/>
<ellipse cx="1071.5" cy="249.5" rx="4.3" ry="2.6" fill="none" stroke="#111" stroke-width="1.1"/>
<path d="M1068 247.5 L1075 251.5" stroke="#111" stroke-width="1.1"/>
<ellipse cx="1071.5" cy="261.5" rx="4.3" ry="2.6" fill="none" stroke="#111" stroke-width="1.1"/>
<path d="M1068 259.5 L1075 263.5" stroke="#111" stroke-width="1.1"/>
<text transform="translate(1063,267.5) rotate(90)" font-size="9.5" fill="#1a1ad0" font-family="Liberation Sans">b</text>
<text x="1071.5" y="143.6" font-family="Liberation Sans" font-weight="normal" font-size="17.2" fill="#0808dc" stroke="#0808dc" stroke-width="0.9" text-anchor="middle" textLength="9.8" lengthAdjust="spacingAndGlyphs">0</text>
<path d="M1060.5 1161.5 V1047.5 L1071 1035.5 L1081.5 1047.5 V1161.5 Z" fill="none" stroke="#000" stroke-width="2.4"/>
<rect x="1062.5" y="1055.8" width="16" height="8.4" rx="4.2" fill="#2f6d08"/>
<text transform="translate(1075,1060.0) rotate(-90)" font-size="12" text-anchor="middle" fill="#c8f0b0">1</text>
<rect x="1062.5" y="1067.8" width="16" height="8.4" rx="4.2" fill="#777777"/>
<ellipse cx="1070.5" cy="1072.0" rx="5.2" ry="3" fill="none" stroke="#ffffff" stroke-width="1.2"/>
<path d="M1066.5 1069.5 L1074.5 1074.5" stroke="#ffffff" stroke-width="1.2"/>
<rect x="1062.5" y="1079.8" width="16" height="8.4" rx="4.2" fill="#777777"/>
<ellipse cx="1070.5" cy="1084.0" rx="5.2" ry="3" fill="none" stroke="#ffffff" stroke-width="1.2"/>
<path d="M1066.5 1081.5 L1074.5 1086.5" stroke="#ffffff" stroke-width="1.2"/>
<rect x="1062.5" y="1091.8" width="16" height="8.4" rx="4.2" fill="#2f6d08"/>
<text transform="translate(1075,1096.0) rotate(-90)" font-size="12" text-anchor="middle" fill="#c8f0b0">1</text>
<rect x="1062.5" y="1103.8" width="16" height="8.4" rx="4.2" fill="#777777"/>
<ellipse cx="1070.5" cy="1108.0" rx="5.2" ry="3" fill="none" stroke="#ffffff" stroke-width="1.2"/>
<path d="M1066.5 1105.5 L1074.5 1110.5" stroke="#ffffff" stroke-width="1.2"/>
<rect x="1062.5" y="1115.8" width="16" height="8.4" rx="4.2" fill="#777777"/>
<ellipse cx="1070.5" cy="1120.0" rx="5.2" ry="3" fill="none" stroke="#ffffff" stroke-width="1.2"/>
<path d="M1066.5 1117.5 L1074.5 1122.5" stroke="#ffffff" stroke-width="1.2"/>
<rect x="1062.5" y="1127.8" width="16" height="8.4" rx="4.2" fill="#777777"/>
<ellipse cx="1070.5" cy="1132.0" rx="5.2" ry="3" fill="none" stroke="#ffffff" stroke-width="1.2"/>
<path d="M1066.5 1129.5 L1074.5 1134.5" stroke="#ffffff" stroke-width="1.2"/>
<rect x="1062.5" y="1139.8" width="16" height="8.4" rx="4.2" fill="#2f6d08"/>
<text transform="translate(1075,1144.0) rotate(-90)" font-size="12" text-anchor="middle" fill="#c8f0b0">1</text>
<rect x="1061" y="1055" width="18.5" height="10.5" fill="rgba(255,90,70,0.4)" stroke="#e01818" stroke-width="1.8"/>
<rect x="1062.5" y="1056.3" width="16" height="8.4" rx="4.2" fill="#2f6d08"/>
<text transform="translate(1075,1060.5) rotate(-90)" font-size="12" text-anchor="middle" fill="#c8f0b0">1</text>
<text transform="translate(1079.5,1053.5) rotate(-90)" font-size="10" fill="#1a1ad0" font-family="Liberation Sans">b</text>
<text x="1071.5" y="1182.6" font-family="Liberation Mono" font-weight="normal" font-size="20.2" fill="#0808dc" stroke="#0808dc" stroke-width="0.9" text-anchor="middle" textLength="9.8" lengthAdjust="spacingAndGlyphs">I</text>
<path d="M1180.5 1077.5 V1047.5 L1191 1035.5 L1201.5 1047.5 V1077.5 Z" fill="none" stroke="#000" stroke-width="2.4"/>
<rect x="1182.5" y="1055.8" width="16" height="8.4" rx="4.2" fill="#777777"/>
<ellipse cx="1190.5" cy="1059.5" rx="5.2" ry="3" fill="none" stroke="#fff" stroke-width="1.2"/>
<path d="M1186.5 1057.0 L1194.5 1062.0" stroke="#fff" stroke-width="1.2"/>
<text transform="translate(1199.5,1053.5) rotate(-90)" font-size="10" fill="#1a1ad0" font-family="Liberation Sans">b</text>
<text x="1192" y="1098.6" font-family="Liberation Mono" font-weight="normal" font-size="20.6" fill="#0808dc" stroke="#0808dc" stroke-width="0.9" text-anchor="middle" textLength="39.0" lengthAdjust="spacingAndGlyphs">LOAD</text>
</g>
<rect x="1387" y="102" width="6" height="1112" rx="3" fill="#b5b7b9"/>
<rect x="1387" y="181" width="6" height="474" rx="3" fill="#3daee9"/>
<rect x="295" y="1224" width="1082" height="6" rx="3" fill="#b5b7b9"/>
<rect x="327" y="1224" width="480" height="6" rx="3" fill="#3daee9"/>
</svg><!--/CANVAS-->
</body></html>
